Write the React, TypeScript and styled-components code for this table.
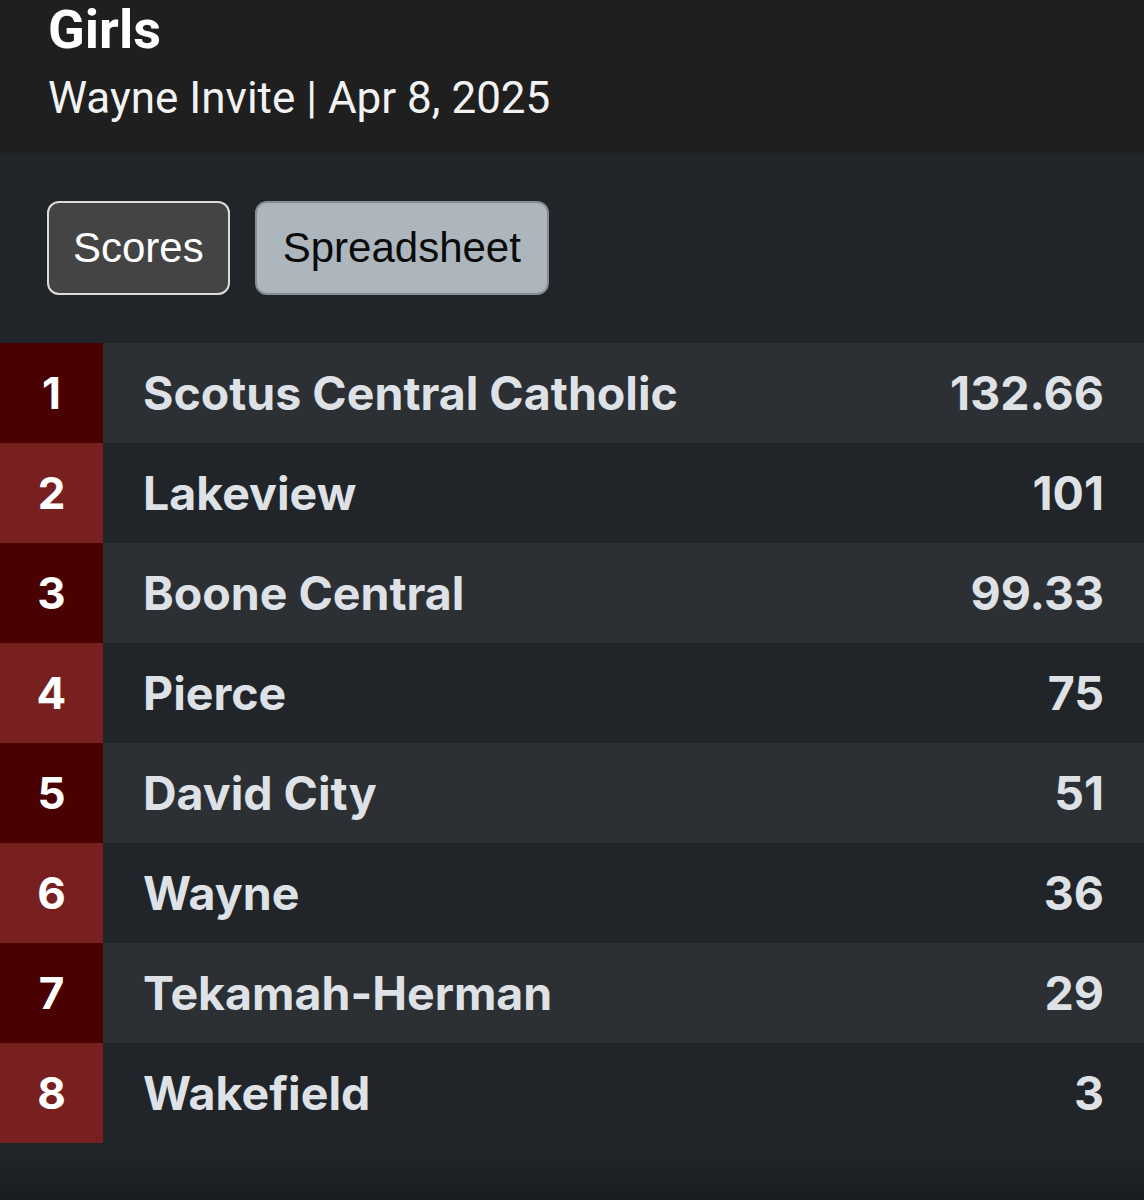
import React from 'react';
import styled, {createGlobalStyle} from 'styled-components';

const GlobalStyle = createGlobalStyle`
  html, body {
    margin: 0;
    padding: 0;
    background: #212529;
  }
  #root {
    min-height: 1200px;
  }
`;

const Page = styled.div`
  min-height: 1200px;
  background: linear-gradient(to bottom, #212529 0, #212529 1150px, #1a1d20 1200px);
  display: flex;
  flex-direction: column;
`;

const Header = styled.header`
  background: #1f1f1f;
  height: 153px;
  box-sizing: border-box;
  padding: 0 48px;
  color: #fff;
  font-family: Roboto, "Liberation Sans", sans-serif;
`;

const Title = styled.h1`
  margin: 0;
  font-size: 54px;
  font-weight: 700;
  line-height: 60px;
`;

const Subtitle = styled.div`
  margin-top: 12px;
  font-size: 44px;
  line-height: 52px;
  font-weight: 400;
  color: #f2f2f2;
`;

const Toolbar = styled.div`
  display: flex;
  gap: 25px;
  padding: 48px 47px;
`;

const Tab = styled.button<{$active?: boolean}>`
  height: 94px;
  box-sizing: border-box;
  padding: 0 ${p => (p.$active ? 24 : 26)}px;
  border-radius: 12px;
  font-family: "Liberation Sans", Arial, sans-serif;
  font-size: 42px;
  border: 2px solid ${p => (p.$active ? '#dcdcdc' : '#868d95')};
  background: ${p => (p.$active ? '#444444' : '#adb5bd')};
  color: ${p => (p.$active ? '#ffffff' : '#0a0a0a')};
`;

const Table = styled.div`
  display: flex;
  flex-direction: column;
`;

const Row = styled.div<{$odd: boolean}>`
  display: flex;
  align-items: center;
  height: 100px;
  background: ${p => (p.$odd ? '#2c3034' : '#212529')};
  font-family: Inter, "Liberation Sans", sans-serif;
  font-weight: 700;
  font-size: 46.5px;
`;

const Rank = styled.div<{$odd: boolean}>`
  width: 103px;
  height: 100%;
  display: flex;
  align-items: center;
  justify-content: center;
  background: ${p => (p.$odd ? '#4a0101' : '#782020')};
  color: #ffffff;
  font-size: 44px;
`;

const Name = styled.div`
  flex: 1;
  padding-left: 40px;
  color: #dee2e6;
`;

const Score = styled.div`
  padding-right: 40px;
  color: #dee2e6;
  text-align: right;
`;

const results = [
  {name: 'Scotus Central Catholic', score: '132.66'},
  {name: 'Lakeview', score: '101'},
  {name: 'Boone Central', score: '99.33'},
  {name: 'Pierce', score: '75'},
  {name: 'David City', score: '51'},
  {name: 'Wayne', score: '36'},
  {name: 'Tekamah-Herman', score: '29'},
  {name: 'Wakefield', score: '3'},
];

export default function App() {
  return (
    <Page>
      <GlobalStyle />
      <Header>
        <Title>Girls</Title>
        <Subtitle>Wayne Invite | Apr 8, 2025</Subtitle>
      </Header>
      <Toolbar>
        <Tab $active>Scores</Tab>
        <Tab>Spreadsheet</Tab>
      </Toolbar>
      <Table>
        {results.map((r, i) => (
          <Row key={r.name} $odd={i % 2 === 0}>
            <Rank $odd={i % 2 === 0}>{i + 1}</Rank>
            <Name>{r.name}</Name>
            <Score>{r.score}</Score>
          </Row>
        ))}
      </Table>
    </Page>
  );
}
